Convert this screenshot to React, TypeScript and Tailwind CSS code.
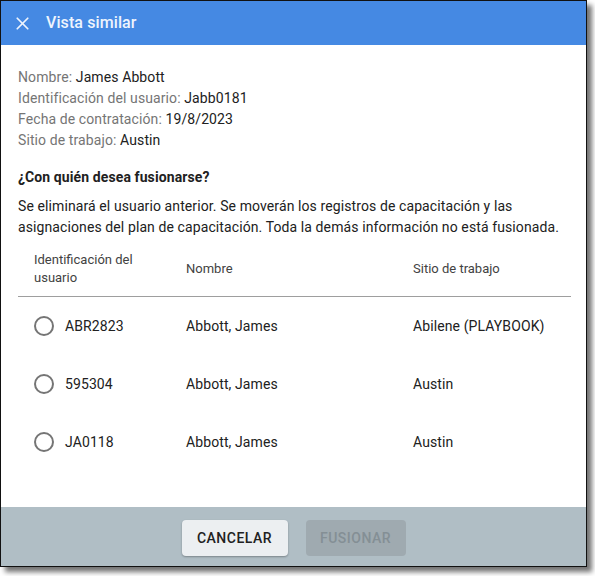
import { X } from "lucide-react";

const rows = [
  { id: "ABR2823", name: "Abbott, James", site: "Abilene (PLAYBOOK)" },
  { id: "595304", name: "Abbott, James", site: "Austin" },
  { id: "JA0118", name: "Abbott, James", site: "Austin" },
];

const details = [
  { label: "Nombre:", value: "James Abbott" },
  { label: "Identificación del usuario:", value: "Jabb0181" },
  { label: "Fecha de contratación:", value: "19/8/2023" },
  { label: "Sitio de trabajo:", value: "Austin" },
];

export default function App() {
  return (
    <div
      className="w-[595px] h-[576px] bg-white"
      style={{ fontFamily: "Roboto, 'Liberation Sans', sans-serif" }}
    >
      <div className="w-[587px] h-[567px] border border-[#111] bg-white flex flex-col shadow-[5px_5px_5px_rgba(0,0,0,0.55)]">
        <header className="h-[44px] bg-[#4589e3] flex items-center pl-[11px] shrink-0">
          <X size={21} strokeWidth={2} className="text-[#eef4fd]" />
          <h1 className="ml-[13px] text-[16px] font-medium text-[#eef4fd] tracking-[0.1px]">
            Vista similar
          </h1>
        </header>

        <main className="flex-1 pl-[17px] pr-[15px] pt-[22px] text-[14px] text-[#212121] tracking-[0.1px]">
          <div className="leading-[21px]">
            {details.map((d) => (
              <p key={d.label}>
                <span className="text-[#757575]">{d.label}</span> {d.value}
              </p>
            ))}
          </div>

          <h2 className="mt-[16px] font-bold leading-[21px]">
            ¿Con quién desea fusionarse?
          </h2>
          <p className="mt-[8px] leading-[21px]">
            Se eliminará el usuario anterior. Se moverán los registros de capacitación y las asignaciones del plan de capacitación. Toda la demás información no está fusionada.
          </p>

          <div className="mt-[4px]">
            <div className="grid grid-cols-[152px_227px_1fr] border-b border-[#9e9e9e] text-[13px] text-[#424242] leading-[18px] tracking-normal">
              <div className="px-4 py-[9px]">Identificación del usuario</div>
              <div className="px-4 flex items-center">Nombre</div>
              <div className="px-4 flex items-center">Sitio de trabajo</div>
            </div>
            {rows.map((r) => (
              <div
                key={r.id}
                className="grid grid-cols-[152px_227px_1fr] h-[58px] items-center"
              >
                <div className="px-4 flex items-center gap-[11px]">
                  <span className="w-[20px] h-[20px] rounded-full border-2 border-[#757575] shrink-0" />
                  <span>{r.id}</span>
                </div>
                <div className="px-4">{r.name}</div>
                <div className="px-4">{r.site}</div>
              </div>
            ))}
          </div>
        </main>

        <footer className="h-[59px] bg-[#b0bec5] flex justify-center gap-[18px] pt-[13px] shrink-0">
          <button className="h-[36px] w-[106px] rounded-[4px] bg-[#eceff1] text-[14px] font-medium tracking-[0.5px] text-[#212121] shadow-[0_1px_2px_rgba(0,0,0,0.3)]">
            CANCELAR
          </button>
          <button className="h-[36px] w-[100px] rounded-[4px] bg-[#9faab0] text-[14px] font-medium tracking-[0.5px] text-[#848f95]">
            FUSIONAR
          </button>
        </footer>
      </div>
    </div>
  );
}
